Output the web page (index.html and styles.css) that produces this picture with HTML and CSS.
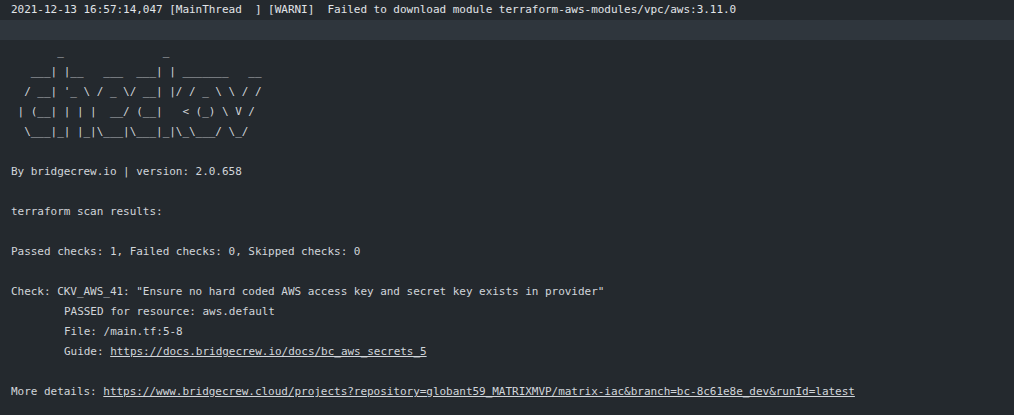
FILE: index.html
```html
<!DOCTYPE html>
<html>
<head>
<meta charset="utf-8">
<link rel="stylesheet" href="styles.css">
</head>
<body>
<div class="log">
  <div class="line top">2021-12-13 16:57:14,047 [MainThread  ] [WARNI]  Failed to download module terraform-aws-modules/vpc/aws:3.11.0</div>
  <div class="line band"></div>
  <div class="out">
    <div class="line">       _               _              </div>
    <div class="line">   ___| |__   ___  ___| | _______   __</div>
    <div class="line">  / __| '_ \ / _ \/ __| |/ / _ \ \ / /</div>
    <div class="line"> | (__| | | |  __/ (__|   &lt; (_) \ V / </div>
    <div class="line">  \___|_| |_|\___|\___|_|\_\___/ \_/  </div>
    <div class="line"></div>
    <div class="line">By bridgecrew.io | version: 2.0.658 </div>
    <div class="line"></div>
    <div class="line">terraform scan results:</div>
    <div class="line"></div>
    <div class="line">Passed checks: 1, Failed checks: 0, Skipped checks: 0</div>
    <div class="line"></div>
    <div class="line">Check: CKV_AWS_41: "Ensure no hard coded AWS access key and secret key exists in provider"</div>
    <div class="line indent">PASSED for resource: aws.default</div>
    <div class="line indent">File: /main.tf:5-8</div>
    <div class="line indent"><span>Guide: </span><a class="link" href="#">https://docs.bridgecrew.io/docs/bc_aws_secrets_5</a></div>
    <div class="line"></div>
    <div class="line"><span>More details: </span><a class="link" href="#">https://www.bridgecrew.cloud/projects?repository=globant59_MATRIXMVP/matrix-iac&amp;branch=bc-8c61e8e_dev&amp;runId=latest</a></div>
  </div>
</div>
</body>
</html>
```
FILE: styles.css
```css
html, body {
  margin: 0;
  padding: 0;
  background: #24292e;
}
body {
  width: 1014px;
  height: 415px;
  overflow: hidden;
  font-family: "DejaVu Sans Mono", "Liberation Mono", monospace;
  font-size: 11px;
  letter-spacing: -0.03px;
  color: #d1d5da;
}
.log {
  display: flex;
  flex-direction: column;
}
.line {
  height: 20px;
  line-height: 20px;
  padding-left: 11px;
  white-space: pre;
}
.top {
  color: #e1e4e8;
}
.band {
  background: #2f363d;
}
.out {
  display: flex;
  flex-direction: column;
  padding-top: 2px;
}
.out .indent {
  padding-left: 64px;
}
.link {
  color: #d1d5da;
  text-decoration: underline;
}
```
